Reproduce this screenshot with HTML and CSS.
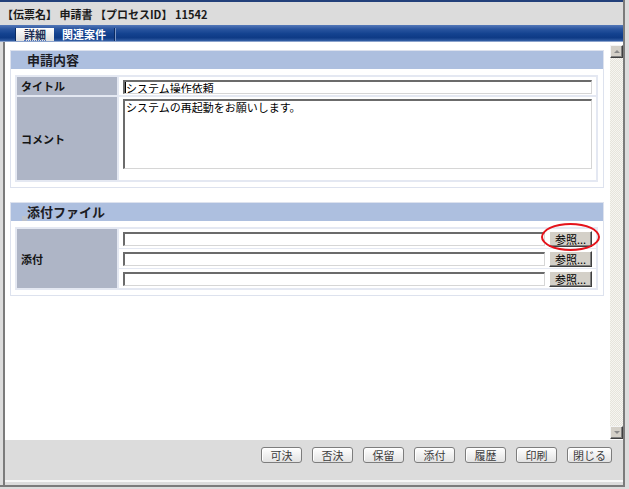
FILE: index.html
```html
<!DOCTYPE html>
<html lang="ja">
<head>
<meta charset="utf-8">
<title>申請書</title>
<link rel="stylesheet" href="styles.css">
</head>
<body>
<div class="window">
  <div class="titlebar">【伝票名】 申請書 【プロセスID】 11542</div>
  <div class="tabbar">
    <div class="tab active"><span class="tab-label">詳細</span></div>
    <div class="tab">関連案件</div>
    <span class="tab-sep"></span>
  </div>
  <div class="pane">
    <div class="viewport">
      <div class="content">
        <section class="box">
          <h2 class="box-head">申請内容</h2>
          <div class="form form-request">
            <div class="label">タイトル</div>
            <div class="value">
              <span class="field-wrap"><input class="field" type="text" value="システム操作依頼"><span class="caret"></span></span>
            </div>
            <div class="label">コメント</div>
            <div class="value value-tall">
              <textarea class="field area">システムの再起動をお願いします。</textarea>
            </div>
          </div>
        </section>
        <section class="box">
          <h2 class="box-head box-head-bullet"><span class="bullet"></span>添付ファイル</h2>
          <div class="form form-attach">
            <div class="label label-span">添付</div>
            <div class="value value-file">
              <input class="field" type="text">
              <span class="browse-wrap"><button class="browse" type="button">参照...</button><span class="ring"></span></span>
            </div>
            <div class="value value-file">
              <input class="field" type="text">
              <span class="browse-wrap"><button class="browse" type="button">参照...</button></span>
            </div>
            <div class="value value-file">
              <input class="field" type="text">
              <span class="browse-wrap"><button class="browse" type="button">参照...</button></span>
            </div>
          </div>
        </section>
      </div>
      <div class="scrollbar">
        <div class="sb-btn"><span class="arrow-up"></span></div>
        <div class="sb-track"></div>
        <div class="sb-btn"><span class="arrow-down"></span></div>
      </div>
    </div>
    <div class="toolbar">
      <button class="btn" type="button">可決</button>
      <button class="btn" type="button">否決</button>
      <button class="btn" type="button">保留</button>
      <button class="btn" type="button">添付</button>
      <button class="btn" type="button">履歴</button>
      <button class="btn" type="button">印刷</button>
      <button class="btn btn-wide" type="button">閉じる</button>
    </div>
  </div>
</div>
</body>
</html>
```

FILE: styles.css
```css
* { box-sizing: border-box; }

html, body {
  margin: 0;
  padding: 0;
}

body {
  width: 629px;
  height: 489px;
  overflow: hidden;
  background: #dcdcdc;
  font-family: "Noto Sans CJK JP", "Liberation Sans", sans-serif;
  font-size: 11px;
  color: #000;
}

.window {
  width: 625px;
  height: 487px;
  border-right: 2px solid #7b7b7b;
  border-bottom: 2px solid #7b7b7b;
  display: flex;
  flex-direction: column;
}

/* ---------- header ---------- */
.titlebar {
  height: 25px;
  border-top: 2px solid #22407a;
  background: #dcdcdc;
  padding: 3px 0 0 2px;
  line-height: 19px;
  font-size: 11px;
  font-weight: bold;
  color: #1a1a1a;
  white-space: pre;
}

.tabbar {
  height: 17px;
  display: flex;
  align-items: flex-end;
  padding-left: 15px;
  background: linear-gradient(to bottom, #5478b8 0%, #2a559f 25%, #13428f 55%, #0e3a85 80%, #3560a6 100%);
  border-bottom: 1px solid #8aa2cc;
}

.tab {
  height: 13px;
  padding: 0 8px;
  font-size: 11px;
  font-weight: bold;
  line-height: 13px;
  color: #fff;
}

.tab.active {
  width: 39px;
  padding: 0;
  border-left: 1px solid #0a2a62;
  background: linear-gradient(#ffffff, #dedede);
  color: #1e2f55;
  text-align: center;
}

.tab-label {
  display: inline-block;
  border-bottom: 1px dotted #4f74bd;
  line-height: 12px;
}

.tab-sep {
  width: 2px;
  height: 13px;
  border-left: 1px solid #0a2a62;
  border-right: 1px solid #7d97c6;
}

/* ---------- body ---------- */
.pane {
  flex: 1;
  margin-left: 3px;
  border-left: 2px solid #7b7b7b;
  display: flex;
  flex-direction: column;
  padding-bottom: 3px;
}

.viewport {
  height: 398px;
  display: flex;
  background: #fff;
}

.content {
  flex: 1;
  padding: 8px 6px 0 5px;
}

.box {
  border: 1px solid #dde2ee;
  background: #fff;
}

.box + .box {
  margin-top: 14px;
}

.box-head {
  margin: 0;
  height: 18px;
  display: flex;
  align-items: center;
  padding-left: 16px;
  background: #adbfdf;
  font-size: 13px;
  font-weight: bold;
  color: #1c1c24;
  line-height: 18px;
}

.box-head-bullet {
  padding-left: 11px;
}

.bullet {
  width: 5px;
  height: 5px;
  align-self: flex-end;
  background: #bcc1cb;
}

.form {
  display: grid;
  grid-template-columns: 100px 1fr;
  column-gap: 2px;
  margin: 6px 5px 5px 4px;
  padding: 2px;
  background: #e4e8f2;
}

.form-request {
  grid-template-rows: 18px 83px;
  row-gap: 2px;
}

.form-attach {
  grid-template-rows: 19px 19px 19px;
  row-gap: 1px;
}

.label {
  display: flex;
  align-items: center;
  padding-left: 4px;
  background: #aeb5c6;
  font-size: 11px;
  font-weight: bold;
  color: #141414;
}

.label-span {
  grid-row: 1 / span 3;
}

.value {
  background: #fff;
  padding: 3px 4px 0 4px;
}

.value-tall {
  padding-top: 2px;
}

.value-file {
  display: flex;
  align-items: flex-start;
  gap: 4px;
  padding-top: 2px;
}

.field-wrap {
  position: relative;
  display: block;
}

.field {
  display: block;
  width: 100%;
  height: 14px;
  margin: 0;
  padding: 0 1px;
  border-top: 2px solid #6b6b6b;
  border-left: 2px solid #6b6b6b;
  border-right: 1px solid #d6d6d6;
  border-bottom: 1px solid #d6d6d6;
  background: #fff;
  font-family: "Noto Sans CJK JP", sans-serif;
  font-size: 11px;
  line-height: 11px;
  color: #000;
  outline: none;
}

.value-file .field {
  flex: 1;
  margin-top: 1px;
}

.caret {
  position: absolute;
  left: 2px;
  top: 2px;
  width: 1px;
  height: 11px;
  background: #000;
}

.area {
  height: 70px;
  resize: none;
  overflow: hidden;
  padding: 0 1px;
  line-height: 13px;
}

.browse-wrap {
  position: relative;
  display: block;
}

.browse {
  display: block;
  width: 43px;
  height: 16px;
  margin: 0;
  padding: 0;
  background: #d4d0c8;
  border: 1px solid;
  border-color: #ffffff #404040 #404040 #ffffff;
  box-shadow: inset -1px -1px 0 #808080;
  font-family: "Noto Sans CJK JP", sans-serif;
  font-size: 11px;
  line-height: 13px;
  color: #000;
}

.ring {
  position: absolute;
  left: -8px;
  top: -8px;
  width: 59px;
  height: 28px;
  border: 2px solid #e5131b;
  border-radius: 50%;
  pointer-events: none;
}

/* ---------- scrollbar ---------- */
.scrollbar {
  width: 13px;
  display: flex;
  flex-direction: column;
  padding: 3px 0 1px;
  background: #fff;
}

.sb-track {
  flex: 1;
  background: repeating-conic-gradient(#e6e4dc 0 25%, #f6f5f1 0 50%) 0 0 / 2px 2px;
}

.sb-btn {
  height: 13px;
  display: flex;
  align-items: center;
  justify-content: center;
  background: #d4d0c8;
  border: 1px solid;
  border-color: #f4f4f4 #404040 #404040 #f4f4f4;
  box-shadow: inset -1px -1px 0 #808080;
}

.arrow-up,
.arrow-down {
  width: 0;
  height: 0;
  border-left: 3px solid transparent;
  border-right: 3px solid transparent;
}

.arrow-up {
  border-bottom: 3px solid #8a8a8a;
}

.arrow-down {
  border-top: 3px solid #8a8a8a;
}

/* ---------- toolbar ---------- */
.toolbar {
  height: 42px;
  display: flex;
  justify-content: flex-end;
  align-items: flex-start;
  gap: 10px;
  padding: 7px 11px 0 0;
  background: #dcdcdc;
  border-bottom: 2px solid #f7f7f7;
}

.btn {
  width: 41px;
  height: 16px;
  margin: 0;
  padding: 0;
  border: 1px solid #7d7d7d;
  border-radius: 3px;
  background: linear-gradient(#ffffff, #e2e2e2);
  box-shadow: inset 1px 1px 0 #ffffff;
  font-family: "Noto Sans CJK JP", sans-serif;
  font-size: 11px;
  line-height: 14px;
  color: #3c3c3c;
}

.btn-wide {
  width: 45px;
}
```
